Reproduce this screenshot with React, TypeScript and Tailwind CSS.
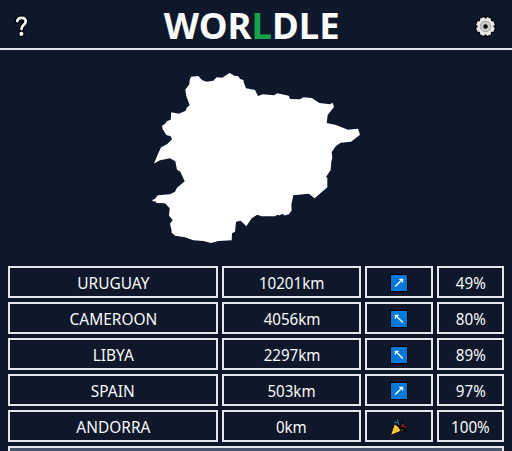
type Direction = "ne" | "nw" | "win";

interface Guess {
  country: string;
  distance: string;
  direction: Direction;
  percent: string;
}

const guesses: Guess[] = [
  { country: "URUGUAY", distance: "10201km", direction: "ne", percent: "49%" },
  { country: "CAMEROON", distance: "4056km", direction: "nw", percent: "80%" },
  { country: "LIBYA", distance: "2297km", direction: "nw", percent: "89%" },
  { country: "SPAIN", distance: "503km", direction: "ne", percent: "97%" },
  { country: "ANDORRA", distance: "0km", direction: "win", percent: "100%" },
];

function ArrowTile({ flipped }: { flipped: boolean }) {
  return (
    <svg width="18" height="18" viewBox="0 0 18 18">
      <rect x="0.5" y="0.5" width="17" height="17" fill="#0078d7" stroke="#000" />
      <g
        transform={flipped ? "translate(18 0) scale(-1 1)" : undefined}
        stroke="#fff"
        strokeWidth="1.4"
        fill="none"
      >
        <path d="M5.2 12.6 L12 5.8" />
        <path d="M9.3 5.4 H12.6 V8.7" strokeWidth="1.1" />
      </g>
    </svg>
  );
}

function PartyPopper() {
  return (
    <svg width="18" height="18" viewBox="0 0 18 18">
      <path d="M4.5 6 Q9 8 11 13 L1.6 17 Q0.6 17 1 16 Z" fill="#ffc83d" stroke="#000" strokeWidth="0.8" />
      <path d="M3.5 10.5 h1 M4 13.5 h1 M7 11.5 h1" stroke="#f0a050" strokeWidth="0.9" />
      <path d="M9.2 9.2 L6.8 6.6 L3.5 4.8 L3.2 3.6 L6.4 4 L6.6 1 L8.2 0.8 L9.8 4 L9.6 8 Z" fill="#000" />
      <path d="M4 4.2 L7 5 M7.4 1.5 L8 4 L8.8 7" stroke="#1f86a6" strokeWidth="1.2" fill="none" />
      <path d="M9.5 10 Q10 6 13.3 5.6 L15 7.4 L17.6 8 L17 10.5 L13 11 L17 12.5 L16.5 14 L11.5 12.5 Z" fill="#000" />
      <path d="M11 8.8 L13 6.8 L14.2 8.6 L16.6 9.4" stroke="#a3261c" strokeWidth="1.3" fill="none" />
      <path d="M11.5 11.6 L13 12.2" stroke="#c47a1c" strokeWidth="1" />
      <circle cx="12" cy="3.5" r="0.9" fill="#000" />
    </svg>
  );
}

function GuessRow({ guess }: { guess: Guess }) {
  return (
    <>
      <div className="col-span-3 flex h-8 items-center justify-center border-2 border-gray-200 pt-0.5">
        <span className="scale-x-[0.965]">{guess.country}</span>
      </div>
      <div className="col-span-2 flex h-8 items-center justify-center border-2 border-gray-200 pt-0.5">
        <span className="scale-x-[0.945]">{guess.distance}</span>
      </div>
      <div className="flex h-8 items-center justify-center border-2 border-gray-200 pt-0.5">
        {guess.direction === "win" ? <PartyPopper /> : <ArrowTile flipped={guess.direction === "nw"} />}
      </div>
      <div className="flex h-8 items-center justify-center border-2 border-gray-200 pt-0.5 pl-px">
        <span className="scale-x-[0.95]">{guess.percent}</span>
      </div>
    </>
  );
}

function QuestionIcon() {
  return (
    <svg width="15" height="23" viewBox="0 0 15 23">
      <path d="M3.3 6.2 Q3.6 2.8 7.6 2.8 Q11.7 2.8 11.7 6.2 Q11.7 8.4 9.5 10.2 Q7.5 11.9 7.5 14" fill="none" stroke="#000" strokeWidth="5" strokeLinecap="round" />
      <circle cx="7.4" cy="18.9" r="3.1" fill="#000" />
      <path d="M3.3 6.2 Q3.6 2.8 7.6 2.8 Q11.7 2.8 11.7 6.2 Q11.7 8.4 9.5 10.2 Q7.5 11.9 7.5 14" fill="none" stroke="#f2f2f2" strokeWidth="2.8" strokeLinecap="round" />
      <circle cx="7.4" cy="18.9" r="2.1" fill="#f2f2f2" />
    </svg>
  );
}

const teeth = [22.5, 67.5, 112.5, 157.5, 202.5, 247.5, 292.5, 337.5];

function GearIcon() {
  return (
    <svg width="21" height="21" viewBox="0 0 21 21">
      <g fill="#000" stroke="#000" strokeWidth="2" strokeLinejoin="round">
        <circle cx="10.5" cy="10.5" r="8" />
        {teeth.map((a) => (
          <path key={a} d="M8 4 L8.3 1.2 H12.7 L13 4 Z" transform={`rotate(${a} 10.5 10.5)`} />
        ))}
      </g>
      <g fill="#e8e8e8">
        <circle cx="10.5" cy="10.5" r="8" />
        {teeth.map((a) => (
          <path key={a} d="M8 4 L8.3 1.2 H12.7 L13 4 Z" transform={`rotate(${a} 10.5 10.5)`} />
        ))}
      </g>
      <circle cx="10.5" cy="10.5" r="5.2" fill="#cccccc" stroke="#999" strokeWidth="0.9" />
      <circle cx="10.5" cy="10.5" r="2.2" fill="#000" />
    </svg>
  );
}

function CountryShape() {
  return (
    <svg width="210" height="172" viewBox="151 72 210 172" className="mx-auto block">
      <path
        fill="#fff"
        d="M255 90 L246 88.3 244.2 83.7 243.3 80 240.3 79 238 76 234.3 75.7 229.7 73 226 75.3 222.3 77.7 216.7 77.3 213.3 80.7 206.7 81.7 202.3 80.3 198.3 76 191 76.7 189.7 80 189.3 84.3 185.3 89.7 186.3 96 189.7 105.3 186.7 107.7 185.7 110.7 178.7 113.7 171.3 112.3 170.7 119.7 166.7 121.3 165 124 162 125.7 162.7 129.3 166.3 135 170.7 136.3 172 139.3 167 144.3 161 147.3 158.3 153.3 154 163.5 160 160.3 170 158.3 175.3 161.3 177 169.7 180.3 171.7 184.7 181.3 177 187.7 175 191.7 170 194.3 157.7 195.3 155 199 152 200 153.5 201.5 155.5 201.3 156.3 203 165 203.3 169.7 208.3 169 215.7 172.7 220 170 223.7 171.7 231 171.3 232.3 175 235.7 185 237.3 193.3 240.3 203.3 241 211 243 218.3 241 231.7 240.3 232 233.3 235 231.7 236 221.7 240.7 220.7 246.3 226.3 251.7 218.3 257.3 214.7 261.7 216.3 275 216.3 277.3 214.7 279.5 215.4 282.7 213.8 284.5 215.4 289 214.3 291.7 210.3 291.3 205 293.3 195.3 308.7 193.7 314.7 198.3 327.3 187.3 327.3 177.7 326 177 330.7 170 331.3 161.7 332.3 158 331.7 152.3 335.7 146.3 340.7 142.7 351 141.7 360 134.7 358 128.7 348 129.7 336 125 326.7 123 327.7 115 334 107 332.7 102.7 330 104.3 319.3 103 311.7 98 303.3 97.3 300 99.3 290 99 288.7 95.7 277.3 93.3 274 95.3 262.7 94.3 258 96 Z"
      />
    </svg>
  );
}

export default function App() {
  return (
    <div className="h-[451px] w-[512px] overflow-hidden bg-[#0f172a] font-['Noto_Sans',sans-serif] text-base text-[#f8fafc]">
      <header className="flex h-[50px] items-center justify-between border-b-2 border-gray-200 pr-4 pl-[14px]">
        <button type="button" aria-label="Help" className="pt-1">
          <QuestionIcon />
        </button>
        <h1 className="scale-x-[1.015] pt-[3px] text-4xl font-bold">
          WOR<span className="text-[#16a34a]">L</span>DLE
        </h1>
        <button type="button" aria-label="Settings" className="pt-1">
          <GearIcon />
        </button>
      </header>
      <main>
        <div className="pt-[22px] pb-[22px]">
          <CountryShape />
        </div>
        <div className="grid grid-cols-7 gap-1 px-2">
          {guesses.map((g) => (
            <GuessRow key={g.country} guess={g} />
          ))}
          <div className="col-span-7 h-8 border-2 border-gray-200 bg-[#475569]" />
        </div>
      </main>
    </div>
  );
}
